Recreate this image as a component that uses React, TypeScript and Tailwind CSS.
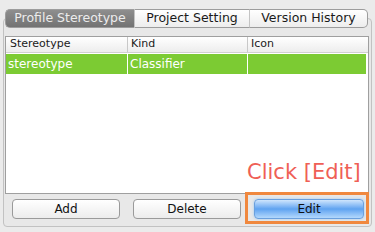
import React from "react";

const tabs = ["Profile Stereotype", "Project Setting", "Version History"];

const Tab: React.FC<{ label: string; active?: boolean; last?: boolean; first?: boolean }> = ({
  label,
  active,
  last,
  first,
}) => (
  <div
    className={
      "flex items-center justify-center h-full text-[12.5px] border-y border-[#9c9c9c] " +
      (first ? "rounded-l-[5px] border-l " : "") +
      (last ? "rounded-r-[5px] border-r " : "border-r border-r-[#c4c4c4] ") +
      (active
        ? "bg-gradient-to-b from-[#8e8e8e] to-[#737373] text-[#ececec] border-[#6a6a6a]"
        : "bg-gradient-to-b from-[#ffffff] to-[#ededed] text-[#1a1a1a]")
    }
    style={{ width: first ? 130 : last ? 118 : 115 }}
  >
    {label}
  </div>
);

const Button: React.FC<{ label: string; primary?: boolean }> = ({ label, primary }) => (
  <button
    className={
      "h-[20px] rounded-[4px] text-[12px] leading-none flex items-center justify-center " +
      (primary
        ? "w-[110px] border border-[#6aa0de] bg-gradient-to-b from-[#cfe5fc] via-[#5fa3f0] to-[#b3d8fc] text-[#111] shadow-[0_0_3px_#9cc8f4]"
        : "w-[108px] border border-[#9a9a9a] bg-gradient-to-b from-[#ffffff] to-[#ececec] text-[#111]")
    }
  >
    {label}
  </button>
);

export default function App() {
  return (
    <div
      className="w-[375px] h-[232px] bg-[#ebebeb] pt-[9px] relative overflow-hidden"
      style={{ fontFamily: '"DejaVu Sans", "Liberation Sans", sans-serif' }}
    >
      <div className="relative z-10 ml-[5px] h-[19px] flex">
        {tabs.map((t, i) => (
          <Tab key={t} label={t} active={i === 0} first={i === 0} last={i === tabs.length - 1} />
        ))}
      </div>

      <div className="-mt-[10px] ml-[3px] w-[369px] h-[209px] border border-[#c2c2c2] rounded-[4px] bg-[#e8e8e8] pt-[17px] pl-[1px] pr-[2px] flex flex-col">
        <div className="h-[158px] w-[364px] border border-[#9f9f9f] bg-white flex flex-col">
          <div className="h-[16px] flex text-[11px] text-[#1a1a1a] bg-gradient-to-b from-[#ffffff] to-[#ededed] border-b border-[#d0d0d0]">
            <div className="w-[122px] pl-[4px] flex items-center border-r border-[#c8c8c8]">Stereotype</div>
            <div className="w-[120px] pl-[3px] flex items-center border-r border-[#c8c8c8]">Kind</div>
            <div className="flex-1 pl-[3px] flex items-center">Icon</div>
          </div>
          <div className="mt-[1px] h-[20px] mr-[2px] flex text-[12px] text-white bg-[#7ccb33]">
            <div className="w-[122px] pl-[2px] flex items-center border-r border-white">stereotype</div>
            <div className="w-[120px] pl-[2px] flex items-center border-r border-white">Classifier</div>
            <div className="flex-1"></div>
          </div>
        </div>

        <div className="mt-[5px] pl-[7px] flex gap-[13px]">
          <Button label="Add" />
          <Button label="Delete" />
          <Button label="Edit" primary />
        </div>
      </div>

      <div className="absolute left-[247px] top-[162px] text-[21px] leading-none text-[#ef5f56]">Click [Edit]</div>
      <div className="absolute left-[245px] top-[192px] w-[124px] h-[32px] border-[3px] border-[#f0883e]"></div>
    </div>
  );
}
